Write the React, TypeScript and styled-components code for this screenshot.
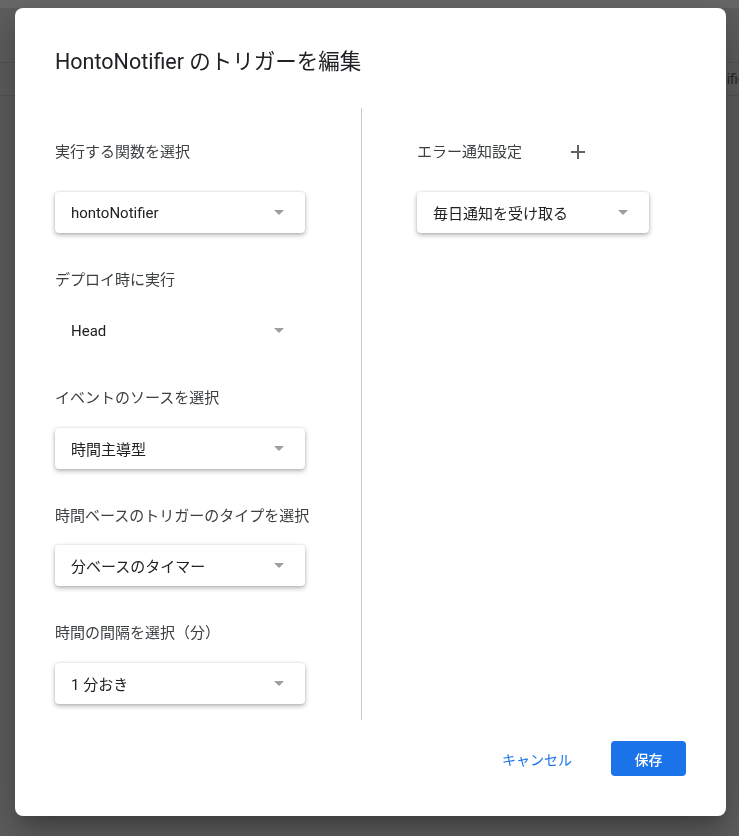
import React from "react";
import styled, { createGlobalStyle } from "styled-components";

const Global = createGlobalStyle`
  html, body { margin: 0; padding: 0; }
  body {
    background: #5e5e5e;
    font-family: Roboto, "Noto Sans CJK JP", sans-serif;
    height: 836px;
    overflow: hidden;
  }
`;

const PageTop = styled.div`
  height: 8px;
  background: #686868;
`;

const PageBar = styled.div`
  height: 54px;
  border-bottom: 1px solid #545454;
`;

const PageToolbar = styled.div`
  height: 32px;
  border-bottom: 1px solid #545454;
  display: flex;
  align-items: center;
  padding-left: 666px;
  font-size: 14px;
  color: #262626;
  white-space: nowrap;
`;

const Overlay = styled.div`
  position: fixed;
  inset: 0;
  display: flex;
  align-items: flex-start;
  padding: 8px 0 0 15px;
`;

const Dialog = styled.div`
  width: 711px;
  height: 808px;
  box-sizing: border-box;
  background: #fff;
  border-radius: 8px;
  padding: 40px;
  display: flex;
  flex-direction: column;
  box-shadow: 0 11px 15px -7px rgba(0, 0, 0, 0.2),
    0 24px 38px 3px rgba(0, 0, 0, 0.14), 0 9px 46px 8px rgba(0, 0, 0, 0.12);
`;

const Title = styled.h2`
  margin: 0;
  font-size: 21.5px;
  line-height: 28px;
  font-weight: 400;
  color: #202124;
`;

const Body = styled.div`
  margin-top: 32px;
  height: 612px;
  display: flex;
`;

const Column = styled.div<{ $right?: boolean }>`
  display: flex;
  flex-direction: column;
  box-sizing: border-box;
  width: ${(p) => (p.$right ? "auto" : "307px")};
  flex: ${(p) => (p.$right ? "1" : "none")};
  padding-top: 34px;
  padding-left: ${(p) => (p.$right ? "55px" : "0")};
  border-right: ${(p) => (p.$right ? "none" : "1px solid #c8c8c8")};
`;

const Field = styled.div<{ $gap: number }>`
  display: flex;
  flex-direction: column;
  gap: ${(p) => p.$gap}px;
  & + & {
    margin-top: 37px;
  }
`;

const LabelRow = styled.div`
  display: flex;
  align-items: center;
  height: 20px;
`;

const Label = styled.div`
  font-size: 15px;
  line-height: 20px;
  color: #3c4043;
`;

const PlusButton = styled.button`
  width: 24px;
  height: 24px;
  margin-left: 44px;
  padding: 0;
  border: none;
  background: transparent;
  display: flex;
  align-items: center;
  justify-content: center;
`;

const Select = styled.div<{ $flat?: boolean; $width: number }>`
  width: ${(p) => p.$width}px;
  height: 41px;
  box-sizing: border-box;
  display: flex;
  align-items: center;
  justify-content: space-between;
  padding: 0 21px 0 16px;
  border-radius: 4px;
  background: #fff;
  box-shadow: ${(p) =>
    p.$flat
      ? "none"
      : "0 2px 5px rgba(0,0,0,0.3), 0 0 2px rgba(0,0,0,0.12)"};
  font-size: 15px;
  color: #202124;
`;

const Arrow = styled.span`
  width: 0;
  height: 0;
  border-left: 5px solid transparent;
  border-right: 5px solid transparent;
  border-top: 5px solid #9e9e9e;
`;

const Footer = styled.div`
  margin-top: 21px;
  display: flex;
  justify-content: flex-end;
  align-items: center;
  gap: 23px;
`;

const TextButton = styled.button`
  height: 35px;
  padding: 0 16px;
  border: none;
  background: transparent;
  color: #1a73e8;
  font-family: inherit;
  font-size: 14px;
  cursor: pointer;
`;

const PrimaryButton = styled.button`
  width: 75px;
  height: 35px;
  border: none;
  border-radius: 4px;
  background: #1a73e8;
  color: #fff;
  font-family: inherit;
  font-size: 14px;
  font-weight: 500;
  cursor: pointer;
`;

type FieldDef = { label: string; value: string; flat?: boolean; gap: number };

const leftFields: FieldDef[] = [
  { label: "実行する関数を選択", value: "hontoNotifier", gap: 30 },
  { label: "デプロイ時に実行", value: "Head", flat: true, gap: 20 },
  { label: "イベントのソースを選択", value: "時間主導型", gap: 20 },
  { label: "時間ベースのトリガーのタイプを選択", value: "分ベースのタイマー", gap: 19 },
  { label: "時間の間隔を選択（分）", value: "1 分おき", gap: 20 },
];

export default function App() {
  return (
    <>
      <Global />
      <PageTop />
      <PageBar />
      <PageToolbar>HontoNotifier</PageToolbar>
      <Overlay>
        <Dialog>
          <Title>HontoNotifier のトリガーを編集</Title>
          <Body>
            <Column>
              {leftFields.map((f) => (
                <Field key={f.label} $gap={f.gap}>
                  <LabelRow>
                    <Label>{f.label}</Label>
                  </LabelRow>
                  <Select $flat={f.flat} $width={250}>
                    <span>{f.value}</span>
                    <Arrow />
                  </Select>
                </Field>
              ))}
            </Column>
            <Column $right>
              <Field $gap={30}>
                <LabelRow>
                  <Label>エラー通知設定</Label>
                  <PlusButton aria-label="追加">
                    <svg width="14" height="14" viewBox="0 0 14 14">
                      <path d="M7 0v14M0 7h14" stroke="#5f6368" strokeWidth="2" />
                    </svg>
                  </PlusButton>
                </LabelRow>
                <Select $width={232}>
                  <span>毎日通知を受け取る</span>
                  <Arrow />
                </Select>
              </Field>
            </Column>
          </Body>
          <Footer>
            <TextButton>キャンセル</TextButton>
            <PrimaryButton>保存</PrimaryButton>
          </Footer>
        </Dialog>
      </Overlay>
    </>
  );
}
